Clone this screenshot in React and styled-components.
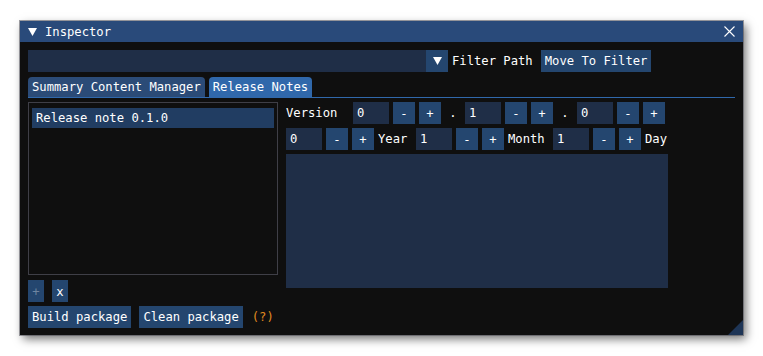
import styled, { createGlobalStyle } from "styled-components";

const GlobalStyle = createGlobalStyle`
  html, body {
    margin: 0;
    background: #ffffff;
  }
  body {
    font-family: "DejaVu Sans Mono", "Liberation Mono", monospace;
    font-size: 12.2px;
    color: #ffffff;
  }
`;

const Page = styled.div`
  padding: 21px 20px;
`;

const Window = styled.div`
  position: relative;
  width: 723px;
  height: 314px;
  background: #0f0f0f;
  box-shadow: 0 0 0 1px rgba(80, 80, 90, 0.55), 3px 4px 9px rgba(0, 0, 0, 0.55);
  display: flex;
  flex-direction: column;
`;

const TitleBar = styled.div`
  height: 21px;
  background: #294a7a;
  display: flex;
  align-items: center;
  gap: 8px;
  padding: 0 8px;
`;

const Title = styled.span`
  flex: 1;
  padding-top: 1px;
  line-height: 20px;
`;

const Body = styled.div`
  flex: 1;
  padding: 8px 8px 7px;
  display: flex;
  flex-direction: column;
`;

const FilterRow = styled.div`
  display: flex;
  align-items: center;
  height: 22px;
  margin-bottom: 5px;
`;

const Frame = styled.div`
  width: ${(p) => p.$w}px;
  height: ${(p) => p.$h || 22}px;
  background: #1f2e47;
  padding: 1px 0 0 4px;
  box-sizing: border-box;
  line-height: 21px;
`;

const Button = styled.div`
  height: 22px;
  box-sizing: border-box;
  padding: 1px 4px 0;
  line-height: 21px;
  background: #24466f;
  color: #ffffff;
  white-space: nowrap;
`;

const IconButton = styled.div`
  width: ${(p) => p.$w || 22}px;
  height: 22px;
  box-sizing: border-box;
  padding-top: ${(p) => (p.$icon ? 0 : 1)}px;
  background: #24466f;
  display: flex;
  align-items: center;
  justify-content: center;
  color: ${(p) => (p.$disabled ? "rgba(255,255,255,0.35)" : "#ffffff")};
`;

const Text = styled.span`
  height: 22px;
  box-sizing: border-box;
  padding-top: 1px;
  line-height: 21px;
  white-space: nowrap;
  margin: ${(p) => p.$m || "0"};
  width: ${(p) => (p.$w ? `${p.$w}px` : "auto")};
  flex-shrink: 0;
`;

const TabBar = styled.div`
  display: flex;
  gap: 4px;
  border-bottom: 1px solid #3068ab;
`;

const Tab = styled.div`
  height: 20px;
  box-sizing: border-box;
  padding: 1px 4px 0;
  line-height: 19px;
  border-radius: 4px 4px 0 0;
  background: ${(p) => (p.$active ? "#3068ab" : "#2b4b77")};
`;

const Main = styled.div`
  display: flex;
  align-items: flex-start;
  gap: 8px;
  margin-top: 4px;
`;

const LeftCol = styled.div`
  width: 250px;
  display: flex;
  flex-direction: column;
  gap: 5px;
`;

const List = styled.div`
  height: 173px;
  box-sizing: border-box;
  border: 1px solid #3f3f47;
  padding: 5px 3px;
`;

const ListItem = styled.div`
  height: 20px;
  box-sizing: border-box;
  padding: 1px 0 0 4px;
  line-height: 19px;
  background: ${(p) => (p.$selected ? "#213d62" : "transparent")};
`;

const Row = styled.div`
  display: flex;
  align-items: center;
  gap: ${(p) => p.$gap || 4}px;
`;

const RightCol = styled.div`
  display: flex;
  flex-direction: column;
  gap: 4px;
`;

const Dot = styled.span`
  width: 16px;
  height: 22px;
  box-sizing: border-box;
  padding-top: 1px;
  text-align: center;
  line-height: 21px;
`;

const BottomRow = styled.div`
  display: flex;
  align-items: center;
  gap: 8px;
  margin-top: 4px;
`;

const Help = styled.span`
  color: #e08a20;
  height: 22px;
  box-sizing: border-box;
  padding-top: 1px;
  line-height: 21px;
  margin-left: 1px;
`;

const Grip = styled.div`
  position: absolute;
  right: 0;
  bottom: 0;
  width: 15px;
  height: 15px;
  background: #1e3556;
  clip-path: polygon(100% 0, 100% 100%, 0 100%);
`;

const Triangle = ({ w = 9, h = 8 }) => (
  <svg width={w} height={h} viewBox="0 0 9 8">
    <polygon points="0,0 9,0 4.5,8" fill="#ffffff" />
  </svg>
);

const Close = () => (
  <svg width="11" height="11" viewBox="0 0 11 11">
    <path d="M0.5 0.5 L10.5 10.5 M10.5 0.5 L0.5 10.5" stroke="#ffffff" strokeWidth="1.1" />
  </svg>
);

const Stepper = ({ value, width = 36 }) => (
  <>
    <Frame $w={width}>{value}</Frame>
    <IconButton>-</IconButton>
    <IconButton>+</IconButton>
  </>
);

export default function App() {
  return (
    <Page>
      <GlobalStyle />
      <Window>
        <TitleBar>
          <Triangle />
          <Title>Inspector</Title>
          <Close />
        </TitleBar>
        <Body>
          <FilterRow>
            <Frame $w={398} />
            <IconButton $icon>
              <Triangle />
            </IconButton>
            <Text $m="0 8px 0 4px">Filter Path</Text>
            <Button>Move To Filter</Button>
          </FilterRow>
          <TabBar>
            <Tab>Summary Content Manager</Tab>
            <Tab $active>Release Notes</Tab>
          </TabBar>
          <Main>
            <LeftCol>
              <List>
                <ListItem $selected>Release note 0.1.0</ListItem>
              </List>
              <Row $gap={8}>
                <IconButton $w={16} $disabled>+</IconButton>
                <IconButton $w={16}>x</IconButton>
              </Row>
            </LeftCol>
            <RightCol>
              <Row>
                <Text $w={63}>Version</Text>
                <Stepper value="0" />
                <Dot>.</Dot>
                <Stepper value="1" />
                <Dot>.</Dot>
                <Stepper value="0" />
              </Row>
              <Row>
                <Stepper value="0" />
                <Text $w={34}>Year</Text>
                <Stepper value="1" />
                <Text $w={41}>Month</Text>
                <Stepper value="1" />
                <Text>Day</Text>
              </Row>
              <Frame $w={382} $h={134} />
            </RightCol>
          </Main>
          <BottomRow>
            <Button>Build package</Button>
            <Button>Clean package</Button>
            <Help>(?)</Help>
          </BottomRow>
        </Body>
        <Grip />
      </Window>
    </Page>
  );
}
